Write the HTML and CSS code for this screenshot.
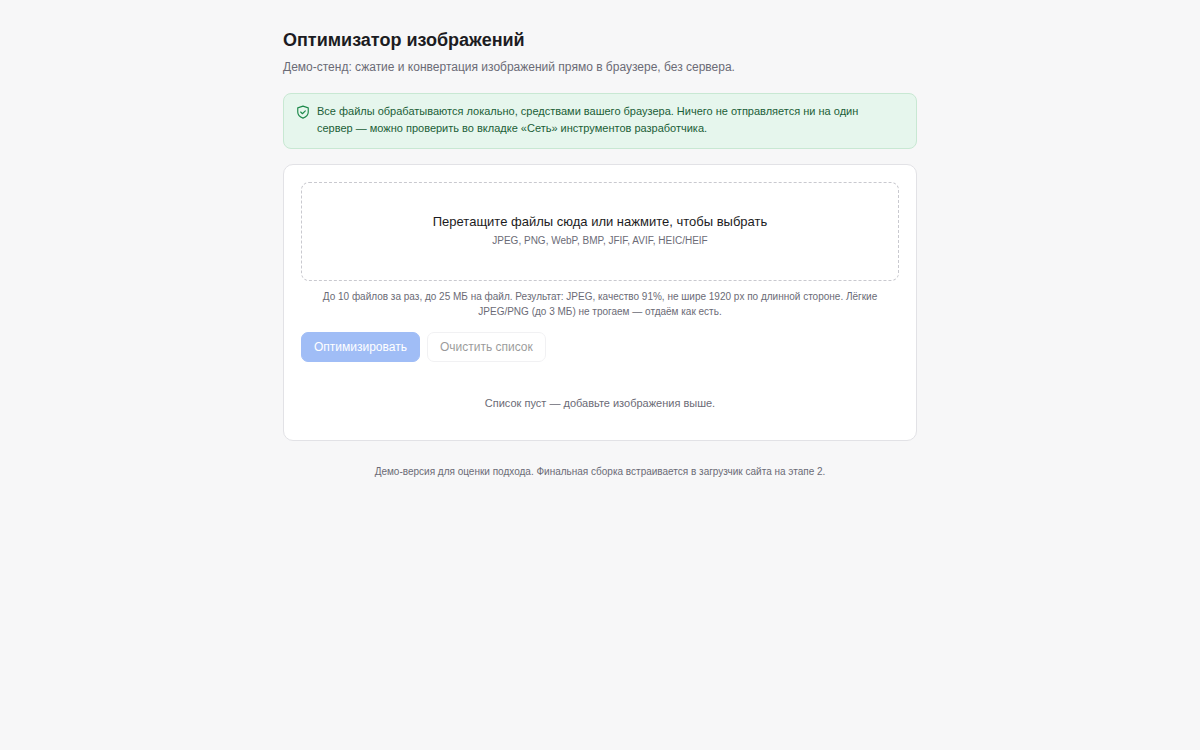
FILE: index.html
```html
<!DOCTYPE html>
<html lang="ru">
<head>
  <meta charset="utf-8">
  <meta name="viewport" content="width=device-width, initial-scale=1">
  <title>Оптимизатор изображений</title>
  <link rel="stylesheet" href="styles.css">
</head>
<body>
  <main class="page">
    <h1>Оптимизатор изображений</h1>
    <p class="subtitle">Демо-стенд: сжатие и конвертация изображений прямо в браузере, без сервера.</p>

    <div class="notice">
      <svg class="notice-icon" viewBox="0 0 24 24" fill="none" stroke="currentColor" stroke-width="2" stroke-linecap="round" stroke-linejoin="round" aria-hidden="true">
        <path d="M12 2l9 3v7c0 5-3.500 8.500-9 10.500C6.500 20.500 3 17 3 12V5z"/>
        <path d="M8 12l3 3 5-5"/>
      </svg>
      <p>Все файлы обрабатываются локально, средствами вашего браузера. Ничего не отправляется ни на один сервер — можно проверить во вкладке «Сеть» инструментов разработчика.</p>
    </div>

    <section class="card">
      <label class="dropzone" for="fileInput">
        <span class="dropzone-title">Перетащите файлы сюда или нажмите, чтобы выбрать</span>
        <span class="dropzone-formats">JPEG, PNG, WebP, BMP, JFIF, AVIF, HEIC/HEIF</span>
      </label>
      <input type="file" id="fileInput" accept="image/*,.heic,.heif" multiple hidden>
      <p class="limits">До 10 файлов за раз, до 25 МБ на файл. Результат: JPEG, качество 91%, не шире 1920 px по длинной стороне. Лёгкие JPEG/PNG (до 3 МБ) не трогаем — отдаём как есть.</p>

      <div class="actions">
        <button type="button" class="btn btn-primary" disabled>Оптимизировать</button>
        <button type="button" class="btn" disabled>Очистить список</button>
      </div>

      <p class="empty">Список пуст — добавьте изображения выше.</p>
    </section>

    <footer>Демо-версия для оценки подхода. Финальная сборка встраивается в загрузчик сайта на этапе 2.</footer>
  </main>
</body>
</html>
```
FILE: styles.css
```css
* {
  box-sizing: border-box;
}

body {
  margin: 0;
  background: #f7f7f8;
  color: #1c1c22;
  font-family: "Liberation Sans", Arial, sans-serif;
  font-size: 14px;
  line-height: 20px;
}

.page {
  max-width: 666px;
  margin: 0 auto;
  padding: 28px 16px;
}

h1 {
  margin: 0 0 5px;
  font-size: 18px;
  line-height: 24px;
}

p {
  margin: 0;
}

.subtitle {
  margin-bottom: 16px;
  color: #6b6b76;
  font-size: 12px;
}

/* Плашка о локальной обработке */
.notice {
  display: flex;
  gap: 7px;
  margin-bottom: 15px;
  padding: 9px 24px 11px 12px;
  border: 1px solid #c8e8d3;
  border-radius: 8px;
  background: #e6f6ed;
  color: #1b5e37;
  font-size: 11px;
  line-height: 17px;
}

.notice-icon {
  flex: none;
  width: 14px;
  height: 14px;
  margin-top: 2px;
  color: #1f8a4c;
}

.card {
  padding: 17px;
  border: 1px solid #e2e2e6;
  border-radius: 10px;
  background: #fff;
}

/* Зона загрузки */
.dropzone {
  display: block;
  padding: 29px 16px 30px;
  border: 1px dashed #c9c9cf;
  border-radius: 8px;
  text-align: center;
  cursor: pointer;
}

.dropzone-title,
.dropzone-formats {
  display: block;
}

.dropzone-title {
  font-size: 13px;
}

.dropzone-formats {
  color: #6b6b76;
  font-size: 10px;
  line-height: 18px;
}

.limits {
  margin: 8px 0 13px;
  color: #6b6b76;
  font-size: 10px;
  line-height: 15px;
  text-align: center;
}

.actions {
  display: flex;
  gap: 7px;
}

.btn {
  padding: 6px 12px;
  border: 1px solid #e2e2e6;
  border-radius: 7px;
  background: #fff;
  color: #1c1c22;
  font: inherit;
  font-size: 12px;
  line-height: 16px;
  cursor: pointer;
}

.btn-primary {
  border-color: #2f6fed;
  background: #2f6fed;
  color: #fff;
}

.btn:disabled {
  opacity: 0.45;
  cursor: not-allowed;
}

.empty {
  padding: 31px 0 10px;
  color: #6b6b76;
  font-size: 11px;
  text-align: center;
}

footer {
  margin-top: 21px;
  color: #6b6b76;
  font-size: 10px;
  text-align: center;
}
```
